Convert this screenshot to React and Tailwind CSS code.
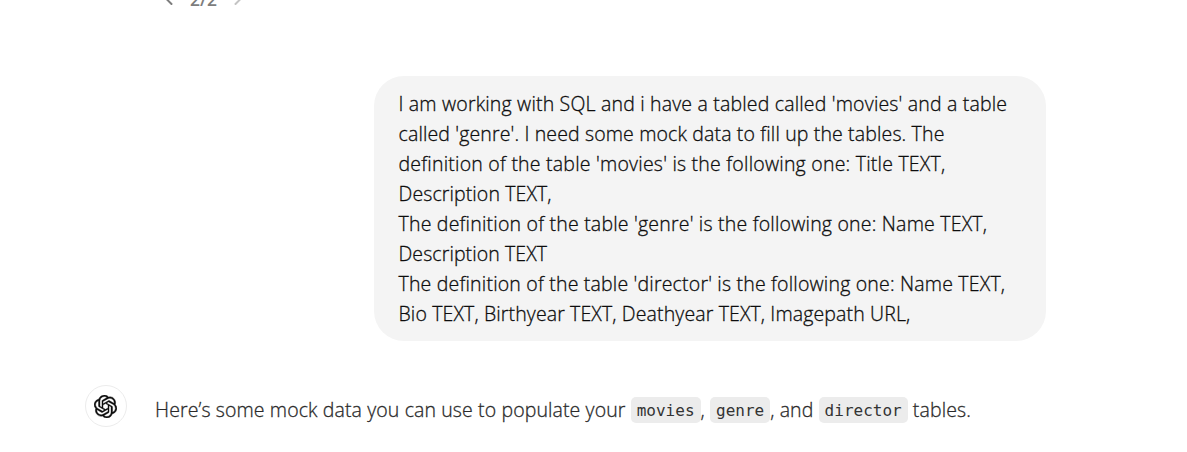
import { SiOpenai } from "react-icons/si";
import { ChevronLeft, ChevronRight } from "lucide-react";

const lines = [
  ["I am working with SQL and i have a tabled called 'movies' and a table", "tracking-[0.18px]"],
  ["called 'genre'. I need some mock data to fill up the tables. The", "tracking-[0.14px]"],
  ["definition of the table 'movies' is the following one: Title TEXT,", "tracking-[0.22px]"],
  ["Description TEXT,", "tracking-[0.11px]"],
  ["The definition of the table 'genre' is the following one: Name TEXT,", "tracking-[0.205px]"],
  ["Description TEXT", "tracking-[0.095px]"],
  ["The definition of the table 'director' is the following one: Name TEXT,", "tracking-[0.19px]"],
  ["Bio TEXT, Birthyear TEXT, Deathyear TEXT, Imagepath URL,", "tracking-[0.13px]"],
];

function Code({ children }) {
  return (
    <code className="inline-block h-[26px] rounded-[5px] bg-[#ececec] px-[6px] font-['DejaVu_Sans_Mono',monospace] text-[16px] font-normal leading-[27px] tracking-normal text-[#333333] [-webkit-text-stroke:0]">
      {children}
    </code>
  );
}

export default function App() {
  return (
    <main className="flex h-[452px] w-[1187px] flex-col overflow-hidden bg-white font-['Open_Sans',sans-serif] text-[19.5px] font-light text-[#0d0d0d] [-webkit-text-stroke:0.3px]">
      <nav className="-mt-[16px] ml-[159px] flex h-[30px] items-center text-[#7d7d7d]">
        <ChevronLeft size={20} strokeWidth={2.4} />
        <span className="w-[49px] text-center text-[17.5px] font-semibold leading-[30px] [-webkit-text-stroke:0]">2/2</span>
        <ChevronRight size={20} strokeWidth={2.4} className="text-[#c4c4c4]" />
      </nav>
      <section className="mt-[62px] ml-[374px] h-[265px] w-[672px] rounded-[30px] bg-[#f4f4f4] pt-[13px] pl-[24.5px]">
        {lines.map(([line, tracking]) => (
          <p key={line} className={`h-[30px] whitespace-nowrap leading-[30px] ${tracking}`}>
            {line}
          </p>
        ))}
      </section>
      <section className="mt-[44px] ml-[85px] flex items-start">
        <div className="flex size-[42px] items-center justify-center rounded-full border border-[#ececec]">
          <SiOpenai size={23} className="mr-[2px] stroke-current stroke-[0.4px]" />
        </div>
        <p className="mt-[7px] ml-[28px] flex h-[35px] items-center whitespace-pre leading-[35px] tracking-[0.11px] text-[#2a2a2a]">
          <span>Here’s some mock data you can use to populate your </span>
          <Code>movies</Code>
          <span>, </span>
          <Code>genre</Code>
          <span>, and </span>
          <Code>director</Code>
          <span> tables.</span>
        </p>
      </section>
    </main>
  );
}
